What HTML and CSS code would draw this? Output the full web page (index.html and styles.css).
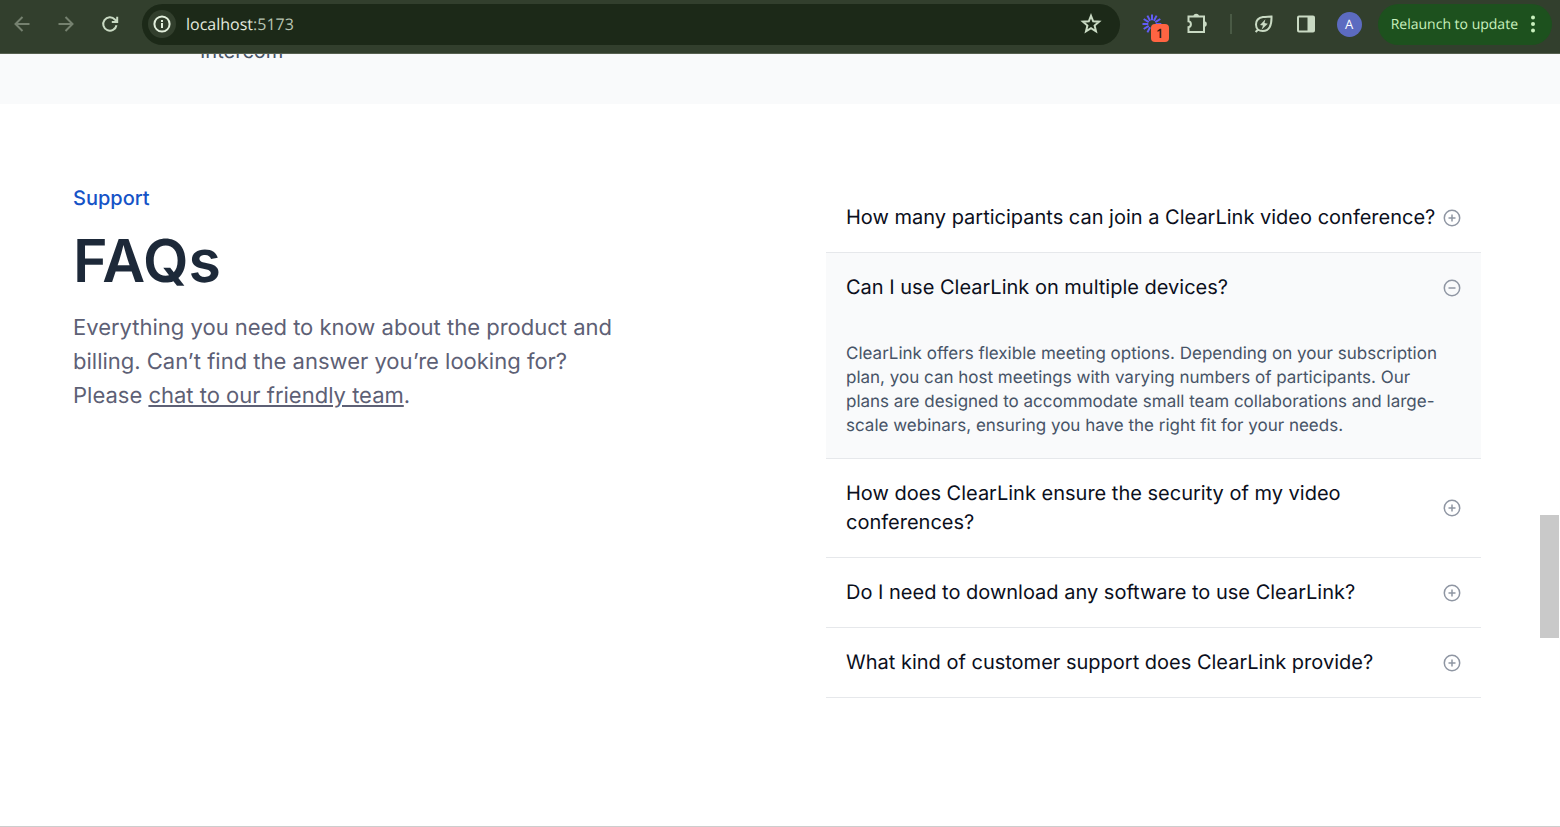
FILE: index.html
```
<!DOCTYPE html>
<html lang="en">
<head>
<meta charset="utf-8">
<title>ClearLink</title>
<link rel="stylesheet" href="styles.css">
</head>
<body>
<div class="browser">
  <header class="toolbar">
    <nav class="history" aria-label="History">
      <button class="tool muted" aria-label="Back"><svg width="20" height="20" viewBox="0 0 20 20"><path d="M17.500 10H4M10.500 3L3.500 10l7 7"/></svg></button>
      <button class="tool muted" aria-label="Forward"><svg width="20" height="20" viewBox="0 0 20 20"><path d="M2.500 10H16M9.500 3l7 7-7 7"/></svg></button>
      <button class="tool" aria-label="Reload"><svg width="20" height="20" viewBox="0 0 20 20"><path d="M16.500 11.200A6.700 6.700 0 1 1 14.900 5.500L17 7.600M17.200 2.700V8h-5.400"/></svg></button>
    </nav>
    <div class="address">
      <button class="site" aria-label="Site information"><svg width="20" height="20" viewBox="0 0 20 20"><circle cx="10" cy="10" r="7.600"/><path d="M10 9v5M10 5.900v2"/></svg></button>
      <div class="url" role="textbox" aria-label="Address" tabindex="0">localhost<span class="port">:5173</span></div>
      <button class="tool star" aria-label="Bookmark"><svg width="22" height="22" viewBox="0 0 22 22"><path d="M11 2.800l2.200 5.500 5.900.4-4.500 3.800 1.400 5.800L11 15.200l-5 3.100 1.400-5.800L2.900 8.700l5.900-.4z"/></svg></button>
    </div>
    <div class="extensions">
      <button class="tool loom" aria-label="Extension, 1 notification">
        <svg width="24" height="24" viewBox="0 0 24 24"><path d="M12 8.300V2.500M13.900 8.800l2.700-5.200M15.300 10.100l5-3.100M15.700 12h5.600M10.100 8.800L7.400 3.600M8.700 10.100l-5-3.100M8.300 12H2.500M8.700 13.900l-5 3.100M10.100 15.200l-2.700 5.200M12 15.700v5.600"/></svg>
        <span class="count">1</span>
      </button>
      <button class="tool" aria-label="Extensions"><svg width="24" height="24" viewBox="0 0 24 24"><path d="M3.500 4.500H19V20H3.500v-4.800c3.200-.5 3.200-5.400 0-5.900z"/><path class="fill" d="M8.400 4.500a2.800 2.800 0 0 1 5.600 0zM19 9.300a2.800 2.800 0 0 1 0 5.600z"/></svg></button>
      <span class="divider"></span>
      <button class="tool" aria-label="Energy saver"><svg width="22" height="22" viewBox="0 0 22 22"><path d="M18.500 3.500c-3 .3-5.600.1-8.500.6-4.400.8-7 3.600-7 7.300 0 4 2.900 6.600 6.700 6.600 6.400 0 9.100-5.200 8.800-14.500zM2.600 19l2.600-2.500"/><path class="fill" d="M12.400 6.200L7 11.900l3 .7-1.500 4.200 6.300-6.100-3.300-.7z"/></svg></button>
      <button class="tool" aria-label="Side panel"><svg width="20" height="20" viewBox="0 0 20 20"><rect x="2" y="2.500" width="16" height="15" rx="1"/><path class="fill" d="M11.500 2.500H18v15h-6.500z"/></svg></button>
      <button class="avatar" aria-label="Profile">A</button>
    </div>
    <button class="relaunch">Relaunch to update
      <svg width="6" height="20" viewBox="0 0 6 20"><circle cx="3" cy="3.500" r="2"/><circle cx="3" cy="10" r="2"/><circle cx="3" cy="16.500" r="2"/></svg>
    </button>
  </header>

  <main class="page">
    <section class="integrations"><p class="tail">Intercom</p></section>

    <section class="support">
      <div class="intro">
        <p class="eyebrow">Support</p>
        <h1 class="title">FAQs</h1>
        <p class="lead">Everything you need to know about the product and billing. Can’t find the answer you’re looking for? Please <a class="chat" href="#chat">chat to our friendly team</a>.</p>
      </div>
      <div class="accordion">
        <article class="item">
          <h2 class="heading"><button class="question" aria-expanded="false">How many participants can join a ClearLink video conference?<svg class="mark" viewBox="0 0 18 18"><circle cx="9" cy="9" r="7.700"/><path d="M9 5.500v7M5.500 9h7"/></svg></button></h2>
        </article>
        <article class="item open">
          <h2 class="heading"><button class="question" aria-expanded="true">Can I use ClearLink on multiple devices?<svg class="mark" viewBox="0 0 18 18"><circle cx="9" cy="9" r="7.700"/><path d="M5.500 9h7"/></svg></button></h2>
          <p class="answer">ClearLink offers flexible meeting options. Depending on your subscription plan, you can host meetings with varying numbers of participants. Our plans are designed to accommodate small team collaborations and large-scale webinars, ensuring you have the right fit for your needs.</p>
        </article>
        <article class="item">
          <h2 class="heading"><button class="question" aria-expanded="false">How does ClearLink ensure the security of my video conferences?<svg class="mark" viewBox="0 0 18 18"><circle cx="9" cy="9" r="7.700"/><path d="M9 5.500v7M5.500 9h7"/></svg></button></h2>
        </article>
        <article class="item">
          <h2 class="heading"><button class="question" aria-expanded="false">Do I need to download any software to use ClearLink?<svg class="mark" viewBox="0 0 18 18"><circle cx="9" cy="9" r="7.700"/><path d="M9 5.500v7M5.500 9h7"/></svg></button></h2>
        </article>
        <article class="item">
          <h2 class="heading"><button class="question" aria-expanded="false">What kind of customer support does ClearLink provide?<svg class="mark" viewBox="0 0 18 18"><circle cx="9" cy="9" r="7.700"/><path d="M9 5.500v7M5.500 9h7"/></svg></button></h2>
        </article>
      </div>
    </section>
    <div class="thumb"></div>
  </main>
</div>
</body>
</html>
```
FILE: styles.css
```
* {
  box-sizing: border-box;
}

body {
  margin: 0;
  background: #fff;
  font-family: Inter, "Liberation Sans", sans-serif;
  text-rendering: geometricPrecision;
}

h1, h2, p {
  margin: 0;
}

button {
  padding: 0;
  border: 0;
  background: none;
  color: inherit;
  font: inherit;
  text-rendering: inherit;
}

svg {
  display: block;
  flex: none;
}

.browser {
  display: flex;
  flex-direction: column;
  min-height: 100vh;
  border-bottom: 1px solid #cdcdcd;
}

/* Browser toolbar */
.toolbar {
  display: flex;
  align-items: center;
  height: 54px;
  padding: 0 8px 5px 12px;
  border-bottom: 1px solid #56604f;
  background: #323f2d;
  color: #c9dac3;
  font-family: "Open Sans", "Noto Sans", sans-serif;
}

.toolbar svg {
  fill: none;
  stroke: currentColor;
  stroke-width: 2;
}

.toolbar .fill {
  fill: currentColor;
  stroke: none;
}

.history {
  display: flex;
  gap: 24px;
}

.muted {
  color: #75816f;
}

.address {
  display: flex;
  flex: 1;
  align-items: center;
  height: 41px;
  margin-left: 22px;
  padding: 0 18px 0 6px;
  border-radius: 21px;
  background: #1c2918;
}

.site {
  display: grid;
  place-items: center;
  width: 28px;
  height: 28px;
  border-radius: 50%;
  background: #323f2d;
  color: #e3f0dd;
}

.url {
  flex: 1;
  margin-left: 10px;
  color: #e3eadf;
  font-size: 16px;
}

.port {
  color: #b7c4b1;
}

.extensions {
  display: flex;
  align-items: center;
  gap: 21px;
  margin: 0 16px 0 20px;
}

.loom {
  position: relative;
  color: #625df5;
}

.count {
  position: absolute;
  top: 12px;
  left: 11px;
  width: 18px;
  border-radius: 4px;
  background: #ff6442;
  color: #2b1a14;
  font-size: 13px;
  font-weight: 600;
  line-height: 18px;
  text-align: center;
}

.divider {
  width: 2px;
  height: 20px;
  background: #4a5a45;
}

.avatar {
  width: 25px;
  height: 25px;
  border-radius: 50%;
  background: #5c6bc0;
  color: #fff;
  font-size: 13px;
}

.relaunch {
  display: flex;
  align-items: center;
  gap: 12px;
  height: 41px;
  padding: 0 16px 0 13px;
  border-radius: 21px;
  background: #1d511e;
  color: #c8f0bd;
  font-size: 14px;
}

.toolbar .relaunch svg {
  fill: currentColor;
  stroke: none;
}

/* Page */
.page {
  position: relative;
  flex: 1;
}

.integrations {
  height: 50px;
  padding-left: 200px;
  overflow: hidden;
  background: #f9fafb;
}

.tail {
  margin-top: -18px;
  color: #475467;
  font-size: 20px;
  line-height: 30px;
}

.support {
  display: grid;
  grid-template-columns: 1fr 655px;
  padding: 79px 79px 64px 73px;
}

.intro {
  max-width: 560px;
}

.eyebrow {
  color: #1553c7;
  font-size: 20px;
  font-weight: 500;
  line-height: 30px;
}

.title {
  margin: 12px 0;
  color: #1d2939;
  font-size: 59px;
  font-weight: 600;
  line-height: 74px;
}

.lead {
  color: #5d6075;
  font-size: 22px;
  line-height: 34px;
}

.chat {
  color: inherit;
}

.item {
  border-bottom: 1px solid #e6e8eb;
}

.open {
  background: #f9fafb;
}

.question {
  display: flex;
  align-items: center;
  justify-content: space-between;
  gap: 4px;
  width: 100%;
  padding: 20px;
  color: #0b0f1c;
  font-size: 20px;
  font-weight: 400;
  line-height: 29px;
  text-align: left;
}

.heading {
  font-size: 20px;
}

.mark {
  width: 18px;
  height: 18px;
  fill: none;
  stroke: #8f96a3;
  stroke-width: 1.5;
}

.answer {
  padding: 20px 32px 20px 20px;
  color: #475467;
  font-size: 17px;
  line-height: 24px;
}

.thumb {
  position: absolute;
  top: 461px;
  right: 1px;
  width: 19px;
  height: 123px;
  background: #c9c9c9;
}
```
